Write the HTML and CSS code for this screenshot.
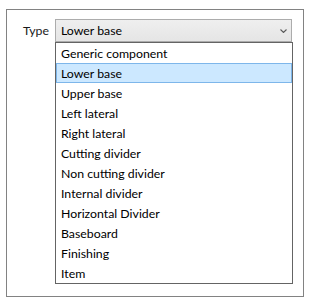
FILE: index.html
```html
<!DOCTYPE html>
<html>
<head>
<meta charset="utf-8">
<link rel="stylesheet" href="styles.css">
</head>
<body>
<div class="frame">
  <div class="row">
    <span class="label">Type</span>
    <div class="combo-wrap">
      <div class="combo">
        <span class="value">Lower base</span>
        <svg class="chev" width="7" height="4" viewBox="0 0 7 4"><path d="M0.5 0.5 L3.5 3.5 L6.5 0.5" fill="none" stroke="#5a5a5a" stroke-width="1.1"/></svg>
      </div>
      <ul class="dropdown">
        <li>Generic component</li>
        <li class="sel">Lower base</li>
        <li>Upper base</li>
        <li>Left lateral</li>
        <li>Right lateral</li>
        <li>Cutting divider</li>
        <li>Non cutting divider</li>
        <li>Internal divider</li>
        <li>Horizontal Divider</li>
        <li>Baseboard</li>
        <li>Finishing</li>
        <li>Item</li>
      </ul>
    </div>
  </div>
</div>
</body>
</html>
```

FILE: styles.css
```css
html, body {
  margin: 0;
  padding: 0;
  background: #ffffff;
}
body {
  font-family: Lato, "Noto Sans", sans-serif;
  font-size: 12.3px;
  color: #000;
}
.frame {
  box-sizing: border-box;
  margin: 9px 0 0 6px;
  width: 298px;
  height: 288px;
  border: 1px solid #828282;
  padding: 9px 0 0 16px;
}
.row {
  display: flex;
  align-items: flex-start;
}
.label {
  width: 32px;
  height: 23px;
  line-height: 24px;
  color: #1a1a1a;
}
.combo-wrap {
  position: relative;
  width: 237px;
}
.combo {
  box-sizing: border-box;
  height: 23px;
  border: 1px solid #acacac;
  background: linear-gradient(#efefef, #e5e5e5);
  display: flex;
  align-items: center;
  padding: 0 4px 0 5px;
}
.value {
  flex: 1;
  line-height: 22px;
}
.chev {
  display: block;
}
.dropdown {
  position: absolute;
  left: 0;
  top: 23px;
  box-sizing: border-box;
  width: 238px;
  margin: 0;
  padding: 0;
  list-style: none;
  border: 1px solid #646464;
  background: #fff;
}
.dropdown li {
  box-sizing: border-box;
  height: 20px;
  line-height: 19px;
  border: 1px solid transparent;
  padding-left: 4px;
}
.dropdown li.sel {
  background: #cce8ff;
  border-color: #7db6ea;
}
```
